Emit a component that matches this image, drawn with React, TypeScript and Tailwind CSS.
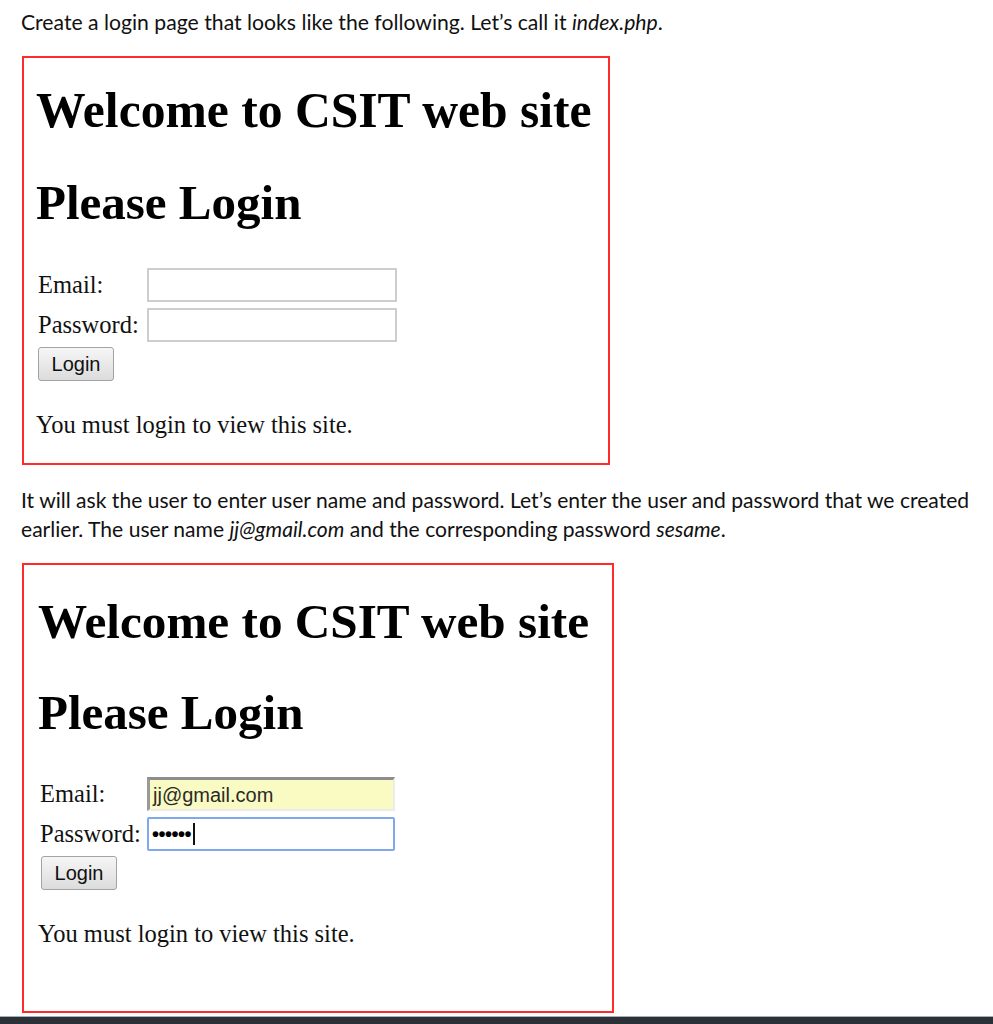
import React from 'react'

const serif = "font-['Liberation_Serif','Times_New_Roman',serif]"
const sans = "font-['Liberation_Sans',Arial,sans-serif]"

function LoginButton({ className }: { className: string }) {
  return (
    <button
      className={`${sans} ${className} w-[76px] h-[34px] text-[20px] text-[#111] rounded-[3px] border border-[#a3a3a3] bg-gradient-to-b from-[#f6f6f6] to-[#dcdcdc]`}
    >
      Login
    </button>
  )
}

function FirstBox() {
  return (
    <div className="ml-[22px] w-[588px] h-[409px] border-2 border-[#ff2b2b] pl-[12px]">
      <h1 className={`${serif} mt-[25px] text-[49.6px] leading-[56px] font-bold text-black`}>
        Welcome to CSIT web site
      </h1>
      <h1 className={`${serif} mt-[36px] text-[49px] leading-[56px] font-bold text-black`}>
        Please Login
      </h1>

      <div className={`${serif} mt-[37px] pl-[2px] grid grid-cols-[109px_250px] gap-y-[6px] items-center text-[24.5px] leading-[28px] text-[#111]`}>
        <span>Email:</span>
        <div className="h-[34px] border-2 border-[#cdcdcd] bg-white" />
        <span>Password:</span>
        <div className="h-[34px] border-2 border-[#cdcdcd] bg-white" />
      </div>
      <LoginButton className="mt-[5px] ml-[2px]" />

      <p className={`${serif} mt-[30px] text-[24.5px] leading-[28px] text-[#111]`}>
        You must login to view this site.
      </p>
    </div>
  )
}

function SecondBox() {
  return (
    <div className="ml-[22px] w-[592px] h-[450px] border-2 border-[#ff2b2b] pl-[14px]">
      <h1 className={`${serif} mt-[29px] text-[49.2px] leading-[56px] font-bold text-black`}>
        Welcome to CSIT web site
      </h1>
      <h1 className={`${serif} mt-[35px] text-[49px] leading-[56px] font-bold text-black`}>
        Please Login
      </h1>

      <div className={`${serif} mt-[36px] pl-[2px] grid grid-cols-[107px_248px] gap-y-[6px] items-center text-[24.5px] leading-[28px] text-[#111]`}>
        <span>Email:</span>
        <div className={`${sans} h-[34px] flex items-center pl-[3px] text-[20px] text-[#2a2a2a] bg-[#fafac3] border-t-[3px] border-l-[3px] border-r-2 border-b-2 border-t-[#8d8d8d] border-l-[#9a9a9a] border-r-[#ececec] border-b-[#ececec]`}>
          jj@gmail.com
        </div>
        <span>Password:</span>
        <div className="h-[34px] flex items-center pl-[3px] rounded-[2px] border-2 border-[#7fa8ee] bg-white">
          <span className={`${sans} text-[20px] leading-none tracking-[-0.5px] font-bold text-black`}>••••••</span>
          <span className="ml-[2px] w-[1.5px] h-[22px] bg-[#111]" />
        </div>
      </div>
      <LoginButton className="mt-[5px] ml-[3px]" />

      <p className={`${serif} mt-[30px] text-[24.5px] leading-[28px] text-[#111]`}>
        You must login to view this site.
      </p>
    </div>
  )
}

export default function App() {
  return (
    <div className="w-[993px] h-[1024px] bg-white overflow-hidden flex flex-col font-['Lato',sans-serif] text-[#111]">
      <p className="pt-[8px] pl-[21px] text-[21.2px] leading-[28px] whitespace-nowrap">
        Create a login page that looks like the following. Let’s call it <i>index.php</i>.
      </p>

      <div className="mt-[20px]">
        <FirstBox />
      </div>

      <p className="mt-[20px] pl-[21px] text-[21.1px] leading-[29px] whitespace-nowrap">
        It will ask the user to enter user name and password. Let’s enter the user and password that we created
        <br />
        earlier. The user name <i>jj@gmail.com</i> and the corresponding password <i>sesame</i>.
      </p>

      <div className="mt-[20px]">
        <SecondBox />
      </div>

      <div className="mt-auto h-[8px] border-t border-[#a7b0b8] bg-[#2b3136]" />
    </div>
  )
}
